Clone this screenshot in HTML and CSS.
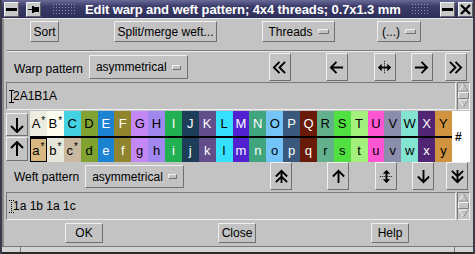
FILE: index.html
```html
<!DOCTYPE html>
<html>
<head>
<meta charset="utf-8">
<link rel="stylesheet" href="styles.css">
</head>
<body>
<div class="window">
  <div class="titlebar">
    <span class="tb-btn"><svg width="11" height="11" viewBox="0 0 11 11"><rect x="0" y="4" width="11" height="3" fill="#000"/></svg></span>
    <span class="tb-btn pin"><svg width="11" height="11" viewBox="0 0 11 11"><rect x="0" y="5" width="5" height="1" fill="#000"/><rect x="4" y="2" width="2" height="7" fill="#000"/><rect x="6" y="3" width="5" height="5" fill="#000"/></svg></span>
    <span class="grip"></span>
    <span class="title">Edit warp and weft pattern; 4x4 threads; 0.7x1.3 mm</span>
    <span class="grip right"></span>
    <span class="tb-btn min"><svg width="11" height="11" viewBox="0 0 11 11"><rect x="0" y="4" width="11" height="3" fill="#000"/></svg></span>
    <span class="tb-btn close"><svg width="11" height="11" viewBox="0 0 11 11"><path d="M1 1 L10 10 M10 1 L1 10" stroke="#000" stroke-width="2.4"/></svg></span>
  </div>

  <div class="client">
    <div class="toolbar">
      <button class="btn sort">Sort</button>
      <button class="btn split">Split/merge weft...</button>
      <button class="btn menu threads">Threads <i class="ind"></i></button>
      <button class="btn menu more">(...) <i class="ind"></i></button>
    </div>

    <div class="pattern-row warp">
      <span class="label">Warp pattern</span>
      <button class="btn menu opt warp-opt">asymmetrical <i class="ind"></i></button>
      <button class="btn arrow a1"><svg viewBox="0 0 16 16"><path d="M8 2 L2 8 L8 14 M14 2 L8 8 L14 14" fill="none" stroke="#000" stroke-width="2"/></svg></button>
      <button class="btn arrow a2"><svg viewBox="0 0 16 16"><path d="M2 8 H15 M8 2 L2 8 L8 14" fill="none" stroke="#000" stroke-width="2"/></svg></button>
      <button class="btn arrow a3"><svg viewBox="0 0 16 16"><path d="M8 1 V15" stroke="#000" stroke-width="1" stroke-dasharray="1 1"/><path d="M2 8 H14" stroke="#000" stroke-width="2"/><path d="M1 8 L5 4 V12 Z M15 8 L11 4 V12 Z" fill="#000"/></svg></button>
      <button class="btn arrow a4"><svg viewBox="0 0 16 16"><path d="M1 8 H14 M8 2 L14 8 L8 14" fill="none" stroke="#000" stroke-width="2"/></svg></button>
      <button class="btn arrow a5"><svg viewBox="0 0 16 16"><path d="M2 2 L8 8 L2 14 M8 2 L14 8 L8 14" fill="none" stroke="#000" stroke-width="2"/></svg></button>
    </div>

    <div class="entry">
      <div class="field"><svg class="caret" width="5" height="13" viewBox="0 0 5 13"><path d="M0 0.5 H5 M2.5 0 V13 M0 12.5 H5" stroke="#000" stroke-width="1"/></svg>2A1B1A</div>
      <div class="scroll">
        <svg width="11" height="26" viewBox="0 0 11 26">
          <path d="M5.5 1 L1 8 H10 Z" fill="#c3c3c3" stroke="#f4f4f4"/>
          <path d="M1 8 H10 L5.5 1" fill="none" stroke="#808080"/>
          <rect x="0.5" y="9.5" width="10" height="6" fill="#c3c3c3" stroke="#808080"/>
          <path d="M0.5 15.5 V9.5 H10.5" fill="none" stroke="#f4f4f4"/>
          <path d="M1 17 H10 L5.5 24 Z" fill="#c3c3c3" stroke="#f4f4f4"/>
          <path d="M10 17 L5.5 24" fill="none" stroke="#808080"/>
        </svg>
      </div>
    </div>

    <div class="palette">
      <div class="nav">
        <button class="btn navbtn down"><svg viewBox="0 0 16 16"><path d="M8 1 V15 M2 9 L8 15 L14 9" fill="none" stroke="#000" stroke-width="2"/></svg></button>
        <button class="btn navbtn up"><svg viewBox="0 0 16 16"><path d="M8 15 V1 M2 7 L8 1 L14 7" fill="none" stroke="#000" stroke-width="2"/></svg></button>
      </div>
      <div class="swatches">
        <div class="srow upper">
          <span class="sw k" style="background:#ecece0">A<sup>*</sup></span>
          <span class="sw k" style="background:#fdfdf0">B<sup>*</sup></span>
          <span class="sw k" style="background:#44d2e2">C</span>
          <span class="sw k" style="background:#80a230">D</span>
          <span class="sw w" style="background:#1c82d2">E</span>
          <span class="sw w" style="background:#90842e">F</span>
          <span class="sw k" style="background:#c488f4">G</span>
          <span class="sw k" style="background:#a088ee">H</span>
          <span class="sw w" style="background:#22b052">I</span>
          <span class="sw w" style="background:#1c3e58">J</span>
          <span class="sw w" style="background:#634e8c">K</span>
          <span class="sw k" style="background:#34e0fc">L</span>
          <span class="sw w" style="background:#5222d2">M</span>
          <span class="sw w" style="background:#40a47e">N</span>
          <span class="sw k" style="background:#74c4f8">O</span>
          <span class="sw w" style="background:#3a587c">P</span>
          <span class="sw w" style="background:#6a1a08">Q</span>
          <span class="sw k" style="background:#62b08c">R</span>
          <span class="sw k" style="background:#50e040">S</span>
          <span class="sw k" style="background:#a4f07c">T</span>
          <span class="sw k" style="background:#fe56d2">U</span>
          <span class="sw k" style="background:#8a8eac">V</span>
          <span class="sw k" style="background:#84e4d2">W</span>
          <span class="sw w" style="background:#522474">X</span>
          <span class="sw k" style="background:#d09440">Y</span>
        </div>
        <div class="srow lower">
          <span class="sw k sel" style="background:#d8b880">a<sup>*</sup></span>
          <span class="sw k" style="background:#e6e6da">b<sup>*</sup></span>
          <span class="sw k" style="background:#c8b8a0">c<sup>*</sup></span>
          <span class="sw k" style="background:#80a230">d</span>
          <span class="sw w" style="background:#1c82d2">e</span>
          <span class="sw w" style="background:#90842e">f</span>
          <span class="sw k" style="background:#c488f4">g</span>
          <span class="sw k" style="background:#a088ee">h</span>
          <span class="sw w" style="background:#22b052">i</span>
          <span class="sw w" style="background:#1c3e58">j</span>
          <span class="sw w" style="background:#634e8c">k</span>
          <span class="sw k" style="background:#34e0fc">l</span>
          <span class="sw w" style="background:#5222d2">m</span>
          <span class="sw w" style="background:#40a47e">n</span>
          <span class="sw k" style="background:#74c4f8">o</span>
          <span class="sw w" style="background:#3a587c">p</span>
          <span class="sw w" style="background:#6a1a08">q</span>
          <span class="sw k" style="background:#62b08c">r</span>
          <span class="sw k" style="background:#50e040">s</span>
          <span class="sw k" style="background:#a4f07c">t</span>
          <span class="sw k" style="background:#fe56d2">u</span>
          <span class="sw k" style="background:#8a8eac">v</span>
          <span class="sw k" style="background:#84e4d2">w</span>
          <span class="sw w" style="background:#522474">x</span>
          <span class="sw k" style="background:#d09440">y</span>
        </div>
      </div>
      <div class="hash">#</div>
    </div>

    <div class="pattern-row weft">
      <span class="label">Weft pattern</span>
      <button class="btn menu opt weft-opt">asymmetrical <i class="ind"></i></button>
      <button class="btn arrow a1"><svg viewBox="0 0 16 16"><path d="M8 2 V15 M2 8 L8 2 L14 8 M2 14 L8 8 L14 14" fill="none" stroke="#000" stroke-width="2"/></svg></button>
      <button class="btn arrow a2"><svg viewBox="0 0 16 16"><path d="M8 15 V2 M2 8 L8 2 L14 8" fill="none" stroke="#000" stroke-width="2"/></svg></button>
      <button class="btn arrow a3"><svg viewBox="0 0 16 16"><path d="M1 8 H15" stroke="#000" stroke-width="1" stroke-dasharray="1 1"/><path d="M8 2 V14" stroke="#000" stroke-width="2"/><path d="M8 1 L4 5 H12 Z M8 15 L4 11 H12 Z" fill="#000"/></svg></button>
      <button class="btn arrow a4"><svg viewBox="0 0 16 16"><path d="M8 1 V14 M2 8 L8 14 L14 8" fill="none" stroke="#000" stroke-width="2"/></svg></button>
      <button class="btn arrow a5"><svg viewBox="0 0 16 16"><path d="M8 1 V14 M2 2 L8 8 L14 2 M2 8 L8 14 L14 8" fill="none" stroke="#000" stroke-width="2"/></svg></button>
    </div>

    <div class="entry weft-entry">
      <div class="field"><svg class="caret" width="5" height="13" viewBox="0 0 5 13"><path d="M0 0.5 H5 M2.5 0 V13 M0 12.5 H5" stroke="#000" stroke-width="1" stroke-dasharray="1 1"/></svg>1a 1b 1a 1c</div>
      <div class="scroll">
        <svg width="11" height="26" viewBox="0 0 11 26">
          <path d="M5.5 1 L1 8 H10 Z" fill="#c3c3c3" stroke="#f4f4f4"/>
          <path d="M1 8 H10 L5.5 1" fill="none" stroke="#808080"/>
          <rect x="0.5" y="9.5" width="10" height="6" fill="#c3c3c3" stroke="#808080"/>
          <path d="M0.5 15.5 V9.5 H10.5" fill="none" stroke="#f4f4f4"/>
          <path d="M1 17 H10 L5.5 24 Z" fill="#c3c3c3" stroke="#f4f4f4"/>
          <path d="M10 17 L5.5 24" fill="none" stroke="#808080"/>
        </svg>
      </div>
    </div>

    <div class="footer">
      <button class="btn foot">OK</button>
      <button class="btn foot">Close</button>
      <button class="btn foot">Help</button>
    </div>
  </div>
  <div class="frame-bottom"><i></i><i class="r"></i></div>
</div>
</body>
</html>
```

FILE: styles.css
```css
* { box-sizing: border-box; }

html, body {
  margin: 0;
  padding: 0;
  background: #000;
}

.window {
  width: 475px;
  height: 254px;
  background: #c3c3c3;
  font-family: "Liberation Sans", Arial, sans-serif;
  font-size: 12px;
  color: #000;
  display: flex;
  flex-direction: column;
  overflow: hidden;
  border-left: 2px solid #3a3a4a;
  border-right: 2px solid #3a3a4a;
}

/* ---- title bar ---- */
.titlebar {
  height: 18px;
  flex: none;
  display: flex;
  align-items: center;
  background: linear-gradient(#6a6a98, #3c3c6a 35%, #2e2e5a);
  color: #fff;
  padding-left: 2px;
}

.tb-btn {
  width: 15px;
  height: 15px;
  background: #c8c8c8;
  border: 1px solid;
  border-color: #f4f4f4 #606060 #606060 #f4f4f4;
  display: flex;
  align-items: center;
  justify-content: center;
  flex: none;
}
.tb-btn.pin { margin-left: 7px; }
.tb-btn.min { margin-left: 11px; }
.tb-btn.close { margin-left: 3px; }

.grip {
  width: 24px;
  height: 12px;
  margin-left: 11px;
  background-image: radial-gradient(circle, #8a8ab8 0.8px, transparent 1px);
  background-size: 3px 3px;
  flex: none;
}
.grip.right { margin-left: 10px; width: 18px; }

.title {
  margin-left: 9px;
  font-weight: bold;
  font-size: 13px;
  white-space: nowrap;
  letter-spacing: -0.1px;
}

/* ---- client ---- */
.client {
  flex: 1;
  display: flex;
  flex-direction: column;
  border-top: 1px solid #e8e8e8;
  border-left: 2px solid #8a8a8a;
  padding-left: 3px;
  padding-right: 3px;
}

.btn {
  font: inherit;
  color: #000;
  background: #c3c3c3;
  border: 1px solid;
  border-color: #f0f0f0 #707070 #707070 #f0f0f0;
  padding: 0;
  margin: 0;
  display: flex;
  align-items: center;
  justify-content: center;
  flex: none;
}

.ind {
  display: inline-block;
  width: 11px;
  height: 5px;
  border: 1px solid;
  border-color: #f0f0f0 #707070 #707070 #f0f0f0;
  margin-left: 5px;
}

.toolbar {
  display: flex;
  align-items: flex-start;
  height: 32px;
  padding-top: 2px;
  border-bottom: 1px solid #7a7a7a;
  box-shadow: 0 1px 0 #ececec;
  flex: none;
}
.toolbar .btn { height: 21px; }
.sort { margin-left: 23px; width: 29px; }
.split { margin-left: 55px; width: 103px; }
.threads { margin-left: 45px; width: 73px; }
.more { margin-left: 42px; width: 44px; }

.pattern-row {
  display: flex;
  align-items: flex-start;
  flex: none;
}
.pattern-row.warp { height: 31px; padding-top: 2px; }
.pattern-row.weft { height: 30px; padding-top: 0; }
.label { margin-left: 7px; align-self: center; }
.warp .label { margin-top: 2px; }
.weft .label { margin-top: -1px; }
.opt { height: 24px; padding: 0 6px; }
.warp-opt { margin-left: 6px; width: 99px; margin-top: 2px; }
.weft-opt { margin-left: 6px; width: 99px; margin-top: 3px; height: 23px; }
.arrow { width: 22px; height: 28px; }
.arrow svg { width: 15px; height: 15px; }
.a1 { margin-left: 81px; }
.a2 { margin-left: 35px; }
.a3 { margin-left: 26px; }
.a4 { margin-left: 15px; }
.a5 { margin-left: 12px; }
.weft .a1 { margin-left: 86px; }

.entry {
  display: flex;
  height: 28px;
  flex: none;
  margin-left: -1px;
}
.field {
  flex: 1;
  border: 1px solid;
  border-color: #7a7a7a #f0f0f0 #f0f0f0 #7a7a7a;
  display: flex;
  align-items: center;
  padding-left: 2px;
  font-size: 12px;
}
.caret { margin-right: -1px; flex: none; }
.scroll {
  width: 13px;
  display: flex;
  align-items: center;
  justify-content: center;
  border: 1px solid;
  border-color: #7a7a7a #f0f0f0 #f0f0f0 #7a7a7a;
  margin-left: 1px;
}

.palette {
  display: flex;
  height: 52px;
  padding-top: 1px;
  flex: none;
  margin-left: -1px;
}
.nav {
  width: 23px;
  display: flex;
  flex-direction: column;
}
.navbtn { width: 22px; }
.navbtn.down { height: 23px; margin-top: 2px; }
.navbtn.up { height: 24px; margin-top: 1px; }
.navbtn svg { width: 16px; height: 16px; }

.swatches {
  flex: 1;
  display: flex;
  flex-direction: column;
  margin-left: 1px;
}
.srow { display: flex; }
.srow.upper { border-bottom: 2px solid #000; height: 27px; }
.srow.lower { height: 24px; }
.sw {
  flex: 1;
  display: flex;
  align-items: center;
  justify-content: center;
  font-size: 13px;
}
.sw sup { font-size: 10px; position: relative; top: -3px; line-height: 0; margin-left: 1px; }
.sw.w { color: #fff; }
.sw.k { color: #000; }
.sw.sel { outline: 1px solid #000; outline-offset: -1px; }

.hash {
  width: 18px;
  background: #fff;
  display: flex;
  align-items: center;
  padding-left: 3px;
  font-size: 12px;
  font-weight: bold;
}

.footer {
  display: flex;
  align-items: flex-start;
  height: 26px;
  padding-top: 3px;
  flex: none;
}
.foot { width: 38px; height: 20px; }
.foot:nth-child(1) { margin-left: 58px; }
.foot:nth-child(2) { margin-left: 115px; }
.foot:nth-child(3) { margin-left: 115px; }

/* window frame below the client area */
.frame-bottom {
  height: 8px;
  flex: none;
  background: #d4d4d4;
  border-top: 1px solid #7a7a7a;
  border-bottom: 2px solid #2a2a2a;
  margin-left: -2px;
  margin-right: -2px;
  display: flex;
  justify-content: space-between;
  padding: 0 20px;
}
.frame-bottom i { width: 1px; background: #7a7a7a; }
```
